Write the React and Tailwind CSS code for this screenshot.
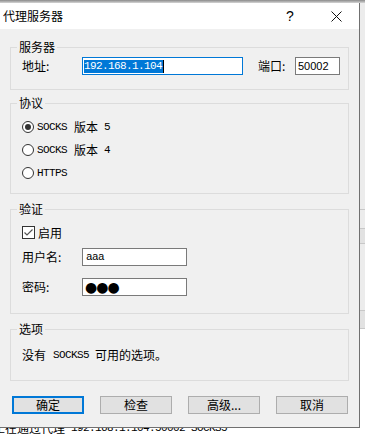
const mono = "font-['Liberation_Mono','Noto_Sans_CJK_SC',monospace]";

function Group({ title, children, className = '' }) {
  return (
    <fieldset className={`border border-[#dcdcdc] pl-[6px] pr-[6px] ${className}`}>
      <legend className="px-[2px] text-[12px] leading-[16px]">{title}</legend>
      <div className="pl-[5px]">{children}</div>
    </fieldset>
  )
}

function Radio({ checked, children }) {
  return (
    <div className="flex items-center h-[23px]">
      <span className="w-[12px] h-[12px] rounded-full border border-[#333] bg-white flex items-center justify-center">
        {checked && <span className="w-[6px] h-[6px] rounded-full bg-[#333]" />}
      </span>
      <span className="ml-[3px] flex items-center text-[12px] leading-[16px]">{children}</span>
    </div>
  )
}

function Button({ primary, children }) {
  return (
    <div
      className={`w-[72px] h-[18px] flex items-center justify-center bg-[#e1e1e1] text-[12px] leading-[16px] ${
        primary ? 'border-2 border-[#0078d7]' : 'border border-[#adadad]'
      }`}
    >
      {children}
    </div>
  )
}

export default function App() {
  return (
    <div className="w-[365px] h-[434px] overflow-hidden bg-white flex flex-col text-black font-['Noto_Sans_CJK_SC',sans-serif]">
      <div className="h-[3px] bg-linear-to-b from-[#8a8a8a] to-[#d6d6d6]" />

      <div className="flex h-[425px]">
        <div className="w-[360px] flex flex-col bg-[#f0f0f0] border-r border-b border-[#707070]">
          {/* title bar */}
          <div className="h-[26px] bg-white flex items-center">
            <span className="pl-[3px] text-[12px] leading-[16px] flex-1">代理服务器</span>
            <span className="w-[46px] text-center text-[14px] leading-[16px] font-['Liberation_Sans',sans-serif]">?</span>
            <span className="w-[46px] flex items-center justify-center">
              <svg width="11" height="11" viewBox="0 0 11 11">
                <path d="M0.5 0.5 L10.5 10.5 M10.5 0.5 L0.5 10.5" stroke="#111" strokeWidth="1" fill="none" />
              </svg>
            </span>
          </div>

          <div className="flex flex-col px-[10px] pt-[10px]">
            <Group title="服务器" className="pb-[14px]">
              <div className="flex items-center h-[18px] mt-[2px] text-[12px]">
                <span className="w-[60px]">地址:</span>
                <div className="w-[161px] h-[18px] border border-[#0078d7] bg-white flex items-center pl-[1px]">
                  <span className={`bg-[#0078d7] text-white h-[13px] flex items-center text-[11px] tracking-[-0.6px] pr-[1px] ${mono}`}>
                    192.168.1.104
                  </span>
                  <span className="w-[1px] h-[13px] bg-black" />
                </div>
                <span className="ml-[15px] w-[37px]">端口:</span>
                <div className="w-[45px] h-[18px] border border-[#7a7a7a] bg-white flex items-center pl-[2px] text-[11px] font-['Liberation_Sans',sans-serif]">
                  50002
                </div>
              </div>
            </Group>

            <Group title="协议" className="mt-[5px] pb-[9px]">
              <div className="pt-[4px]">
                <Radio checked>
                  <span className={`text-[11px] tracking-[-0.6px] ${mono}`}>SOCKS</span>
                  <span className="ml-[7px]">版本</span>
                  <span className={`ml-[6px] text-[11px] ${mono}`}>5</span>
                </Radio>
                <Radio>
                  <span className={`text-[11px] tracking-[-0.6px] ${mono}`}>SOCKS</span>
                  <span className="ml-[7px]">版本</span>
                  <span className={`ml-[6px] text-[11px] ${mono}`}>4</span>
                </Radio>
                <Radio>
                  <span className={`text-[11px] tracking-[-0.6px] ${mono}`}>HTTPS</span>
                </Radio>
              </div>
            </Group>

            <Group title="验证" className="mt-[7px] pb-[17px]">
              <div className="pt-[6px] text-[12px]">
                <div className="flex items-center h-[19px]">
                  <span className="w-[13px] h-[13px] border border-[#333] bg-white flex items-center justify-center">
                    <svg width="11" height="11" viewBox="0 0 11 11">
                      <path d="M1.5 5.5 L4 8 L9.5 2.5" stroke="#555" strokeWidth="1.2" fill="none" />
                    </svg>
                  </span>
                  <span className="ml-[3px] leading-[16px]">启用</span>
                </div>
                <div className="flex items-center mt-[6px]">
                  <span className="w-[60px]">用户名:</span>
                  <div className={`w-[105px] h-[18px] border border-[#7a7a7a] bg-white flex items-center pl-[3px] text-[11px] tracking-[-0.6px] ${mono}`}>
                    aaa
                  </div>
                </div>
                <div className="flex items-center mt-[12px]">
                  <span className="w-[60px]">密码:</span>
                  <div className="w-[105px] h-[18px] border border-[#7a7a7a] bg-white flex items-center pl-[2px] text-[14px] leading-[16px] tracking-[-1px] font-['DejaVu_Sans',sans-serif]">
                    ●●●
                  </div>
                </div>
              </div>
            </Group>

            <Group title="选项" className="mt-[7px] pb-[17px]">
              <div className="pt-[10px] text-[12px] leading-[16px] flex items-center">
                <span>没有</span>
                <span className={`ml-[7px] text-[11px] tracking-[-0.6px] ${mono}`}>SOCKS5</span>
                <span className="ml-[6px]">可用的选项。</span>
              </div>
            </Group>

            <div className="flex justify-between pl-[2px] pr-[1px] mt-[15px]">
              <Button primary>确定</Button>
              <Button>检查</Button>
              <Button>高级...</Button>
              <Button>取消</Button>
            </div>
          </div>
        </div>

        {/* window behind the dialog */}
        <div className="flex-1 flex flex-col bg-[#ececec]">
          <div className="h-[206px]" />
          <div className="h-[19px] border-t border-[#c8c8c8]" />
          <div className="h-[15px] border-t border-[#c8c8c8] bg-[#e2e2e2]" />
          <div className="h-[67px] border-t border-[#c8c8c8]" />
          <div className="h-[18px] border-t border-[#c8c8c8] bg-[#e2e2e2]" />
          <div className="flex-1 border-t border-[#c8c8c8] bg-white" />
        </div>
      </div>

      <div className="h-[6px] overflow-hidden bg-white">
        <div className="-mt-[7px] -ml-[7px] flex items-center whitespace-nowrap text-[12px] leading-[14px]">
          <span>正在通过代理</span>
          <span className={`ml-[6px] text-[11px] tracking-[-0.6px] ${mono}`}>192.168.1.104:50002 SOCKS5</span>
        </div>
      </div>
    </div>
  )
}
